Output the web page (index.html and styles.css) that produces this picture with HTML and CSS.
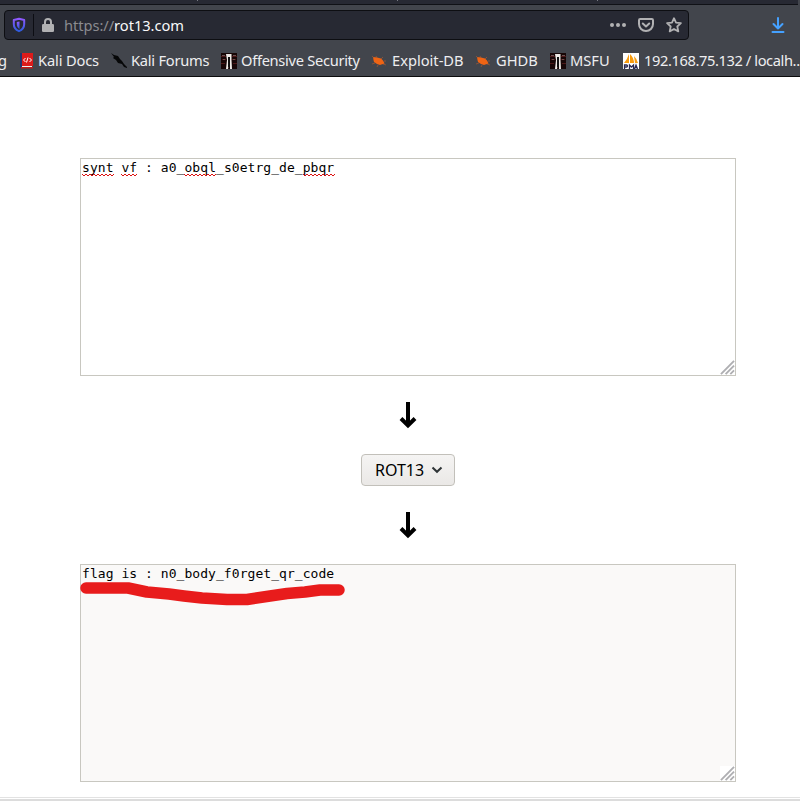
FILE: index.html
```
<!DOCTYPE html>
<html lang="en">
<head>
<meta charset="utf-8">
<title>rot13.com</title>
<link rel="stylesheet" href="styles.css">
</head>
<body>
<svg class="defs" width="0" height="0" aria-hidden="true">
  <symbol id="offsec" viewBox="0 0 16 16">
    <path fill="#170606" d="M0 0h16v16H0z"/>
    <path fill="#4b1818" d="M0 3h5v1H0zM1 6h4v1H1zM11 3h5v1h-5zM11 6h4v1h-4zM0 10h4v1H0zM12 10h4v1h-4z"/>
    <path fill="#6c5050" d="M1 2h3v1H1zM12 2h3v1h-3zM2 6h2v1H2zM12 6h2v1h-2z"/>
    <path fill="#eee9e5" d="M5 1h5.500v6l.5 9H9V4H7.500v9L7 16H5l1-9z"/>
    <path fill="#111" d="M7 4h2v10H7z"/>
  </symbol>
  <symbol id="bug" viewBox="0 0 16 16">
    <path fill="#ef6414" d="M2 4l4 .5 4 1 2 2 1.600 3-1.500.5-1.800.4L9 12l-3-1-3-2-.5-2z"/>
    <path fill="none" stroke="#b85a2b" stroke-width=".6" d="M3 5L1 3M6 5L5 3M10 6l2-2M13 8h2M4 10l-3 1M7 12l-1 2M12 11l3 1"/>
  </symbol>
  <symbol id="wave" viewBox="0 0 32 4">
    <path fill="none" stroke="#dc1010" d="M0 1l2 2 2-2 2 2 2-2 2 2 2-2 2 2 2-2 2 2 2-2 2 2 2-2 2 2 2-2 2 2 2-2"/>
  </symbol>
</svg>
<header class="browser">
  <div class="tabs"><i></i><i></i><i></i></div>
  <div class="toolbar">
    <div class="urlbar">
      <svg class="shield" viewBox="0 0 14 16"><defs><linearGradient id="sg" x2="0" y2="1"><stop stop-color="#9059ff"/><stop offset="1" stop-color="#2d5bdc"/></linearGradient></defs><path fill="none" stroke="url(#sg)" stroke-width="2" stroke-linejoin="round" d="M7 1.800L12.200 3v4.200c0 3.500-2.200 5.600-5.200 7-3-1.400-5.200-3.500-5.200-7V3z"/><path fill="url(#sg)" d="M7.500 4.500V12C5.500 10.800 4.800 9.200 4.800 7V5z"/></svg>
      <span class="divider"></span>
      <svg class="lock" viewBox="0 0 12 14"><path fill="none" stroke="#b1b1b3" stroke-width="2" d="M3 7V4a3 3 0 0 1 6 0v3"/><rect y="6" width="12" height="8" rx="1.300" fill="#b1b1b3"/></svg>
      <span class="url"><span class="scheme">https://</span>rot13.com</span>
      <svg class="dots" viewBox="0 0 16 16" fill="#b1b1b3"><circle cx="2" cy="8" r="2"/><circle cx="8" cy="8" r="2"/><circle cx="14" cy="8" r="2"/></svg>
      <svg class="pocket" viewBox="0 0 16 16" fill="none" stroke="#b1b1b3" stroke-width="2" stroke-linecap="round" stroke-linejoin="round"><path d="M2.200 2h11.600q1.200 0 1.200 1.200V7a7 7 0 0 1-14 0V3.200Q1 2 2.200 2z"/><path d="M4.800 6.500L8 9.500l3.200-3"/></svg>
      <svg class="star" viewBox="0 0 16 16"><path fill="none" stroke="#b1b1b3" stroke-width="1.800" stroke-linejoin="round" d="M8 1.200l2 4.400 4.900.6-3.600 3.300 1 4.900L8 12l-4.300 2.400 1-4.900L1.100 6.200 6 5.600z"/></svg>
    </div>
    <svg class="download" viewBox="0 0 14 16" fill="none" stroke="#45a1ff" stroke-width="2" stroke-linecap="round" stroke-linejoin="round"><path d="M7 1v10.500M2.500 7L7 11.500 11.500 7M1.500 15h11"/></svg>
  </div>
  <nav class="bookmarks">
    <span class="cut">g</span>
    <span class="bm docs"><svg viewBox="0 0 16 16"><path fill="#26346b" d="M1 0h3v15H1z"/><path fill="#dc1a1a" d="M3 0h11v13H3z"/><path fill="#eee" d="M3 13h10v1H3z"/><path fill="#c01818" d="M2 14h12v1.500H2z"/><path fill="none" stroke="#fff" d="M6.500 5L4.500 7l2 2M10.500 5l2 2-2 2M9 4.500l-1.500 5"/></svg>Kali Docs</span>
    <span class="bm forums"><svg viewBox="0 0 16 16"><path fill="#060708" d="M0 0l3 2 4 1 2 3 2 2 2 3 3 3v1l-3-1-2-3-4-1-2-3-3-2 1-1z"/></svg>Kali Forums</span>
    <span class="bm security"><svg><use href="#offsec"/></svg>Offensive Security</span>
    <span class="bm exploit"><svg><use href="#bug"/></svg>Exploit-DB</span>
    <span class="bm ghdb"><svg><use href="#bug"/></svg>GHDB</span>
    <span class="bm msfu"><svg><use href="#offsec"/></svg>MSFU</span>
    <span class="bm pma"><svg viewBox="0 0 16 16"><path fill="#fff" d="M0 0h16v16H0z"/><path fill="#f89c0e" d="M6 1v9H1q3-3 5-9zM7 1q4 4 4 9H7zM11 3q3 3 4 7h-3z"/><path fill="none" stroke="#292951" stroke-width="1.300" d="M1.500 16v-4h2q1 0 1 1t-1 1h-2M6.500 16v-4l2 2 2-2v4M11.500 16l1.500-4 1.500 4M12 14.700h2"/></svg>192.168.75.132 / localh..</span>
  </nav>
</header>
<main>
  <section class="box input"><p><u>synt<svg><use href="#wave"/></svg></u> <u class="short">vf<svg viewBox="0 0 16 4"><use href="#wave" width="32" height="4"/></svg></u> : a0_<u>obql<svg><use href="#wave"/></svg></u>_s0etrg_de_<u>pbqr<svg><use href="#wave"/></svg></u></p><svg class="grip" viewBox="0 0 16 16"><path d="M1 15L15 1M6 15l9-9M11 15l4-4"/></svg></section>
  <svg class="arrow" viewBox="0 0 18 28"><path d="M9 1v23M2 17.500l7 7 7-7"/></svg>
  <button class="select"><span>ROT13</span><svg viewBox="0 0 12 8"><path d="M1.500 1.500L6 5.800l4.500-4.300"/></svg></button>
  <svg class="arrow" viewBox="0 0 18 28"><path d="M9 1v23M2 17.500l7 7 7-7"/></svg>
  <section class="box output"><p>flag is : n0_body_f0rget_qr_code</p>
    <svg class="marker" viewBox="0 0 270 30"><path d="M6 10H48L67 14l22 2L104 18l18 2 25 1.500h20L190 18l17-2.500 18-1.500L240 12H259"/></svg>
    <svg class="grip" viewBox="0 0 16 16"><path class="corner" d="M0 0h16v16H0z"/><path d="M1 15L15 1M6 15l9-9M11 15l4-4"/></svg></section>
</main>
<footer class="edge"></footer>
</body>
</html>
```
FILE: styles.css
```
* { box-sizing: border-box; }
body { margin: 0; height: 801px; overflow: hidden; background: #fff; color: #000; font-family: "Noto Sans", sans-serif; display: flex; flex-direction: column; }
svg { display: block; flex: none; }
.defs { position: absolute; }
.browser { height: 77px; flex: none; background: #42454c; border-bottom: 1px solid #0c0c0d; }
.tabs { width: 798px; height: 5px; background: #272933; border-bottom: 1px solid #101116; display: flex; padding-left: 197px; gap: 199px; }
.tabs i { width: 1px; height: 1px; background: #777982; }
.toolbar { height: 40px; display: flex; padding: 5px 0 0 4px; }
.urlbar { width: 685px; height: 30px; border: 1px solid #0d0e12; border-radius: 4px; background: #272933; display: flex; align-items: center; }
.shield { width: 14px; height: 16px; margin-left: 7px; }
.divider { width: 1px; height: 22px; background: #0c0d13; margin: 0 8px 0 7px; }
.lock { width: 12px; height: 14px; }
.url { margin-left: 10px; flex: 1; font-size: 14.67px; letter-spacing: -.05px; line-height: 28px; color: #f9f9fa; white-space: nowrap; }
.scheme { color: #8b8b90; }
.dots { width: 16px; height: 16px; }
.pocket { width: 16px; height: 16px; margin-left: 12px; }
.star { width: 16px; height: 16px; margin: 0 6px 0 12px; }
.download { width: 14px; height: 16px; margin: 7px 0 0 82px; }
.bookmarks { height: 31px; display: grid; grid-template-columns: 20px 91px 110px 150px 104px 75px 73px 177px; align-items: center; color: #eeeef0; font-size: 14.67px; line-height: 31px; white-space: nowrap; }
.cut { margin-left: -2px; }
.bm { display: flex; align-items: center; gap: 4px; }
.bm svg { width: 16px; height: 16px; }
.docs { gap: 3px; margin-left: -1px; letter-spacing: -.15px; }
.forums { letter-spacing: -.25px; }
.security { letter-spacing: -.3px; }
.exploit, .ghdb, .pma { gap: 5px; }
.pma { letter-spacing: -.4px; }
main { flex: none; height: 720px; padding-top: 81px; display: flex; flex-direction: column; align-items: center; width: 656px; margin-left: 80px; }
.box { position: relative; flex: none; width: 656px; height: 218px; border: 1px solid #c8c7c0; background: #fff; }
.box p { margin: 0 0 0 1px; font: 13px/17px "DejaVu Sans Mono", monospace; letter-spacing: .055px; white-space: pre; }
.box u { position: relative; text-decoration: none; }
.box u svg { position: absolute; left: 0; bottom: -2px; width: 32px; height: 4px; }
.box .short svg { width: 16px; }
.output { background: #faf9f8; }
.grip { position: absolute; right: 0; bottom: 0; width: 15px; height: 15px; }
.grip path { fill: none; stroke: #afafb2; stroke-width: 2; }
.grip .corner { fill: #fff; stroke: none; }
.arrow { width: 18px; height: 28px; margin: 25px 0 25px; }
.arrow path { fill: none; stroke: #000; stroke-width: 4; }
.select { width: 94px; height: 32px; flex: none; border: 1px solid #c2c0ba; border-radius: 4px; background: linear-gradient(#f5f4f3, #eae8e6); padding: 0 11px 0 13px; display: flex; align-items: center; justify-content: space-between; font: 16px "Noto Sans", sans-serif; color: #000; }
.select svg { width: 12px; height: 8px; }
.select path { fill: none; stroke: #2e3436; stroke-width: 2; }
.marker { position: absolute; left: -1px; top: 13px; width: 270px; height: 30px; }
.marker path { fill: none; stroke: #e81c1c; stroke-width: 11.5; stroke-linecap: round; stroke-linejoin: round; }
.edge { height: 4px; flex: none; border-top: 1px solid #e2e2e2; border-bottom: 2px solid #dcdcdc; }
```
